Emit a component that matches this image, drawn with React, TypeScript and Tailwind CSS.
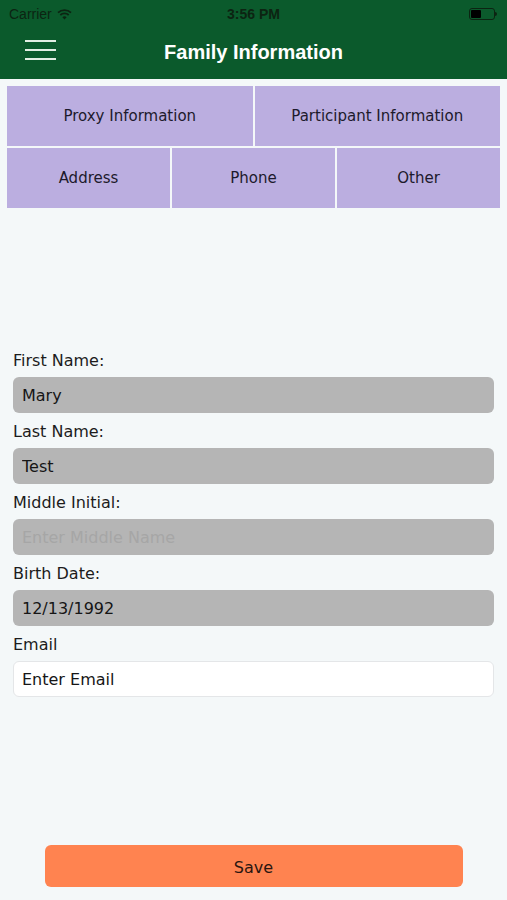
import React from 'react';

const fields = [
  { label: 'First Name:', value: 'Mary', disabled: true },
  { label: 'Last Name:', value: 'Test', disabled: true },
  { label: 'Middle Initial:', value: '', placeholder: 'Enter Middle Name', disabled: true },
  { label: 'Birth Date:', value: '12/13/1992', disabled: true },
  { label: 'Email', value: 'Enter Email', disabled: false },
];

function StatusBar() {
  return (
    <div className="h-[28px] flex items-center justify-between px-[9px] text-[#0c2412] text-[14px] font-['Liberation_Sans',sans-serif]">
      <div className="flex items-center gap-[5px] w-[120px]">
        <span>Carrier</span>
        <svg width="15" height="11" viewBox="0 0 15 11">
          <path d="M1 3.6 A9.5 9.5 0 0 1 14 3.6" stroke="#0c2412" strokeWidth="1.8" fill="none" />
          <path d="M3.3 6 A6.2 6.2 0 0 1 11.7 6" stroke="#0c2412" strokeWidth="1.8" fill="none" />
          <path d="M5.4 8.3 A3 3 0 0 1 9.6 8.3 L7.5 10.6 Z" fill="#0c2412" />
        </svg>
      </div>
      <span className="font-bold">3:56 PM</span>
      <div className="w-[120px] flex justify-end pr-[1px]">
        <div className="flex items-center">
          <div className="w-[26px] h-[12px] border border-[#0c2412] rounded-[3px] p-[1px]">
            <div className="w-[10px] h-full bg-black rounded-[1px]" />
          </div>
          <div className="w-[2px] h-[4px] bg-[#0c2412] rounded-r-sm" />
        </div>
      </div>
    </div>
  );
}

export default function App() {
  return (
    <div className="w-[507px] h-[900px] bg-[#f4f8f9] flex flex-col font-['DejaVu_Sans',sans-serif]">
      <header className="bg-[#0b5a2c] h-[79px] flex flex-col">
        <StatusBar />
        <div className="relative flex-1 flex items-center justify-center">
          <div className="absolute left-[25px] top-[12px] flex flex-col gap-[7px]">
            <div className="w-[31px] h-[2px] bg-[#e3efe4]" />
            <div className="w-[31px] h-[2px] bg-[#e3efe4]" />
            <div className="w-[31px] h-[2px] bg-[#e3efe4]" />
          </div>
          <h1 className="text-white text-[20px] font-bold font-['Liberation_Sans',sans-serif] -mt-[4px]">
            Family Information
          </h1>
        </div>
      </header>

      {/* section tabs */}
      <div className="mt-[7px] mx-[7px] flex flex-col gap-[2px] text-[#1d1a2c] text-[15px]">
        <div className="grid grid-cols-2 gap-[2px] h-[60px]">
          <button className="bg-[#bbaee0] flex items-center justify-center">Proxy Information</button>
          <button className="bg-[#bbaee0] flex items-center justify-center">Participant Information</button>
        </div>
        <div className="grid grid-cols-3 gap-[2px] h-[60px]">
          <button className="bg-[#bbaee0] flex items-center justify-center pt-[1px]">Address</button>
          <button className="bg-[#bbaee0] flex items-center justify-center">Phone</button>
          <button className="bg-[#bbaee0] flex items-center justify-center">Other</button>
        </div>
      </div>

      <form className="mt-[142px] px-[13px] flex flex-col">
        {fields.map((f) => (
          <div key={f.label} className="flex flex-col mb-[8px]">
            <label className="text-[16px] leading-[22px] text-[#1c1c1c] mb-[5px]">{f.label}</label>
            <input
              readOnly
              defaultValue={f.value}
              placeholder={f.placeholder}
              className={
                f.disabled
                  ? 'h-[36px] rounded-[6px] bg-[#b5b5b5] px-[9px] pt-[1px] text-[16px] text-[#161616] placeholder:text-[#a6a6a6] outline-none'
                  : 'h-[36px] rounded-[6px] bg-white border border-[#e4e6e8] px-[8px] pt-[1px] text-[16px] text-[#161616] outline-none'
              }
            />
          </div>
        ))}
      </form>

      <div className="mt-auto mb-[13px] flex justify-center">
        <button className="w-[418px] h-[42px] bg-[#ff8350] rounded-[6px] pt-[3px] text-[16px] text-[#2a1610]">
          Save
        </button>
      </div>
    </div>
  );
}
